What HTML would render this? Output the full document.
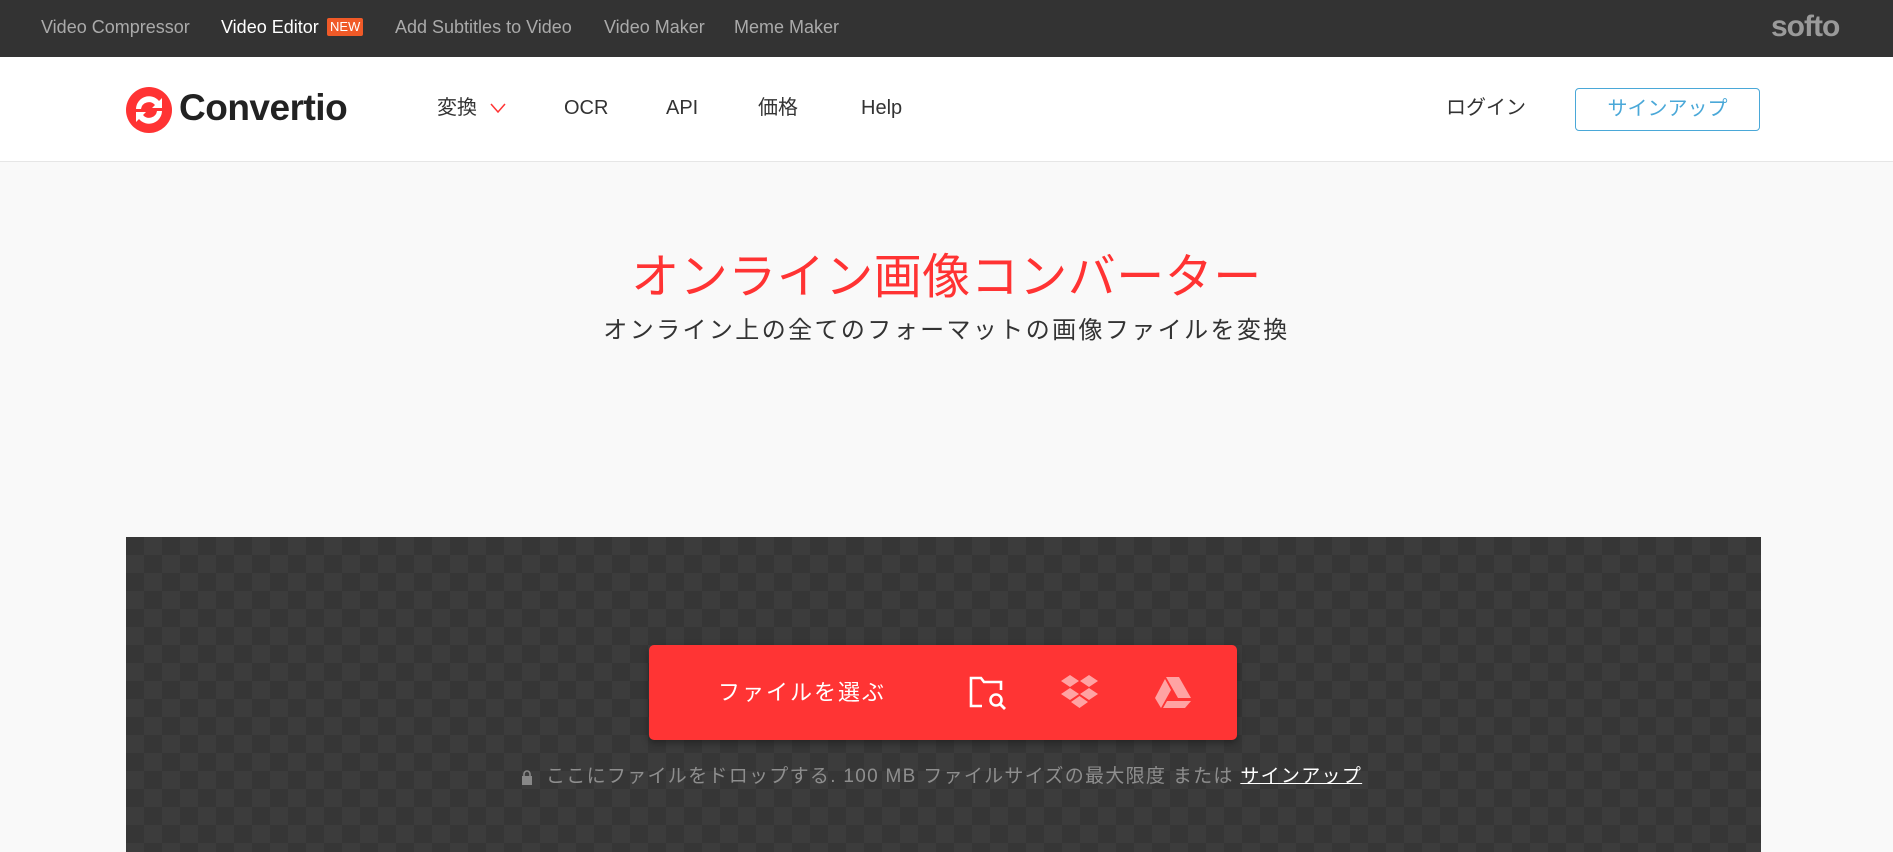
<!DOCTYPE html>
<html><head><meta charset="utf-8"><style>
*{margin:0;padding:0;box-sizing:border-box}
body{width:1893px;height:852px;overflow:hidden;background:#f9f9f9;font-family:"Liberation Sans","Noto Sans CJK JP",sans-serif;position:relative}
.a{position:absolute;white-space:nowrap}
#top{position:absolute;left:0;top:0;width:1893px;height:57px;background:#333}
#top .a{top:16px;font-size:18px;color:#aaa;line-height:22px}
#hdr{position:absolute;left:0;top:57px;width:1893px;height:105px;background:#fff;border-bottom:1px solid #e6e6e6}
.nav{font-size:20px;color:#333;top:96px;line-height:24px}
#drop{position:absolute;left:126px;top:537px;width:1635px;height:315px;background-color:#363636;background-image:linear-gradient(45deg,#3c3c3c 25%,transparent 25%,transparent 75%,#3c3c3c 75%),linear-gradient(45deg,#3c3c3c 25%,transparent 25%,transparent 75%,#3c3c3c 75%);background-size:36px 36px;background-position:0 0,18px 18px}
#btn{position:absolute;left:649px;top:645px;width:588px;height:95px;background:#ff3434;border-radius:5px;box-shadow:0 3px 8px rgba(0,0,0,.35)}
</style></head><body>
<div id="top">
<span class="a" style="left:41px">Video Compressor</span>
<span class="a" style="left:221px;color:#fff">Video Editor</span>
<span class="a" style="left:327px;top:18px;background:#f05a28;color:#fff;font-size:13px;line-height:18px;padding:0 3px;border-radius:2px">NEW</span>
<span class="a" style="left:395px">Add Subtitles to Video</span>
<span class="a" style="left:604px">Video Maker</span>
<span class="a" style="left:734px">Meme Maker</span>
<span class="a" style="left:1771px;top:10px;font-size:30px;font-weight:bold;color:#9a9a9a;letter-spacing:-1px;line-height:34px">softo</span>
</div>
<div id="hdr"></div>
<svg class="a" style="left:126px;top:87px" width="46" height="46" viewBox="0 0 46 46">
<circle cx="23" cy="23" r="23" fill="#f33"/>
<path d="M10 22 A13 13 0 0 1 33 14 L36 11 L36 21 L26 21 L29 18 A8 8 0 0 0 15 22 Z" fill="#fff"/>
<path d="M36 24 A13 13 0 0 1 13 32 L10 35 L10 25 L20 25 L17 28 A8 8 0 0 0 31 24 Z" fill="#fff"/>
</svg>
<span class="a" style="left:179px;top:86px;font-size:37px;font-weight:bold;color:#222;letter-spacing:-0.5px;line-height:44px">Convertio</span>
<span class="a nav" style="left:437px">変換</span>
<svg class="a" style="left:489px;top:102px" width="18" height="12"><path d="M2 2 L9 10 L16 2" stroke="#f33" stroke-width="1.5" fill="none"/></svg>
<span class="a nav" style="left:564px">OCR</span>
<span class="a nav" style="left:666px">API</span>
<span class="a nav" style="left:758px">価格</span>
<span class="a nav" style="left:861px">Help</span>
<span class="a nav" style="left:1446px">ログイン</span>
<div class="a" style="left:1575px;top:88px;width:185px;height:43px;border:1px solid #4aa8d8;border-radius:4px;color:#4aa8d8;font-size:20px;text-align:center;line-height:40px">サインアップ</div>
<div class="a" style="left:0;width:1893px;top:248px;text-align:center;font-size:48px;color:#f33;line-height:60px;letter-spacing:0.5px">オンライン画像コンバーター</div>
<div class="a" style="left:0;width:1893px;top:315px;text-align:center;font-size:24px;color:#333;line-height:32px;letter-spacing:2.4px">オンライン上の全てのフォーマットの画像ファイルを変換</div>
<div id="drop"></div>
<div id="btn"></div>
<span class="a" style="left:718px;top:678px;font-size:22px;color:#fff;line-height:30px;letter-spacing:2px">ファイルを選ぶ</span>
<svg class="a" style="left:968px;top:675px" width="40" height="36" viewBox="0 0 40 36">
<path d="M14 31 H3 V3 H13 L16 7 H33 V15" stroke="#fff" stroke-width="2.6" fill="none"/>
<circle cx="28" cy="25" r="5.5" stroke="#fff" stroke-width="2.6" fill="none"/>
<path d="M32 29 L37 34" stroke="#fff" stroke-width="2.8"/>
</svg>
<svg class="a" style="left:1060px;top:675px" width="40" height="34" viewBox="0 0 40 34" fill="#ffa3a3">
<path d="M10 0 L19 6 L10 12 L1 6Z M29 0 L38 6 L29 12 L20 6Z M10 13 L19 19 L10 25 L1 19Z M29 13 L38 19 L29 25 L20 19Z M19.5 21 L28 27 L19.5 33 L11 27Z"/>
</svg>
<svg class="a" style="left:1154px;top:677px" width="38" height="32" viewBox="0 0 38 32" fill="#ffa3a3">
<path d="M12 0 H25 L37 21 H24Z M11 2 L17 13 L7 31 L1 21Z M13 24 H37 L31 31 H9Z"/>
</svg>
<svg class="a" style="left:521px;top:770px" width="12" height="15" viewBox="0 0 12 15"><rect x="1" y="6" width="10" height="9" fill="#888"/><path d="M3 6 V4 A3 3 0 0 1 9 4 V6" stroke="#888" stroke-width="1.6" fill="none"/></svg>
<span class="a" style="left:546px;top:764px;font-size:19px;color:#8e8e8e;line-height:26px;letter-spacing:1.3px">ここにファイルをドロップする. 100 MB ファイルサイズの最大限度 または <span style="color:#fff;text-decoration:underline">サインアップ</span></span>
</body></html>
